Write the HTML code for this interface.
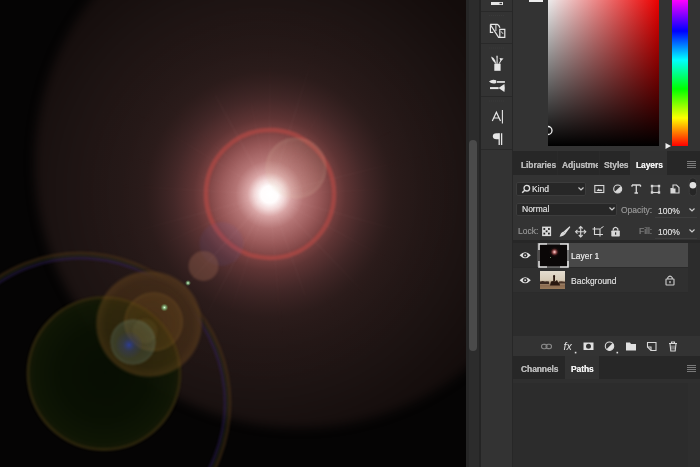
<!DOCTYPE html>
<html><head><meta charset="utf-8">
<style>
*{margin:0;padding:0;box-sizing:border-box}
html,body{width:700px;height:467px;overflow:hidden;background:#2c2c2c;font-family:"Liberation Sans",sans-serif}
.t{will-change:transform}
.a{position:absolute}
#canvas{left:0;top:0;width:467px;height:467px}
.t{color:#c4c4c4;font-size:9px;white-space:nowrap;line-height:1;text-shadow:0 0 0.5px currentColor}
.tab{color:#b8b8b8;font-size:8.5px;font-weight:bold;letter-spacing:-0.1px}
</style></head><body>
<!-- canvas -->
<svg id="canvas" class="a" width="467" height="467" viewBox="0 0 467 467">
<defs>
<filter id="b8" color-interpolation-filters="sRGB" x="-50%" y="-50%" width="200%" height="200%"><feGaussianBlur stdDeviation="7"/></filter>
<filter id="b2" color-interpolation-filters="sRGB" x="-50%" y="-50%" width="200%" height="200%"><feGaussianBlur stdDeviation="1.3"/></filter>
<filter id="b1" color-interpolation-filters="sRGB" x="-50%" y="-50%" width="200%" height="200%"><feGaussianBlur stdDeviation="0.9"/></filter>
<filter id="b5" color-interpolation-filters="sRGB" x="-10%" y="-10%" width="120%" height="120%"><feGaussianBlur stdDeviation="5"/></filter>
<filter id="b3" color-interpolation-filters="sRGB" x="-50%" y="-50%" width="200%" height="200%"><feGaussianBlur stdDeviation="3"/></filter>
<radialGradient id="halo" cx="262" cy="192" r="270" gradientUnits="userSpaceOnUse">
<stop offset="0" stop-color="#2a1c1b"/>
<stop offset="0.55" stop-color="#231716"/>
<stop offset="0.65" stop-color="#201514"/>
<stop offset="0.75" stop-color="#1c1312"/>
<stop offset="0.88" stop-color="#170f0e"/>
<stop offset="1" stop-color="#130c0b"/>
</radialGradient>
<radialGradient id="glow" cx="269.5" cy="194.5" r="190" gradientUnits="userSpaceOnUse">
<stop offset="0" stop-color="#ffffff"/>
<stop offset="0.045" stop-color="#fffcfc"/>
<stop offset="0.08" stop-color="#f2d8d8"/>
<stop offset="0.116" stop-color="#d8a4a4"/>
<stop offset="0.18" stop-color="#b47474"/>
<stop offset="0.263" stop-color="#985858"/>
<stop offset="0.326" stop-color="#7e4444"/>
<stop offset="0.4" stop-color="#5e3434"/>
<stop offset="0.505" stop-color="#442828" stop-opacity="0.95"/>
<stop offset="0.65" stop-color="#2e1d1c" stop-opacity="0.7"/>
<stop offset="0.82" stop-color="#261918" stop-opacity="0.3"/>
<stop offset="1" stop-color="#201514" stop-opacity="0"/>
</radialGradient>
<radialGradient id="gGreen" cx="0.5" cy="0.5" r="0.5">
<stop offset="0" stop-color="#0a1204" stop-opacity="0.8"/>
<stop offset="0.75" stop-color="#0e1605" stop-opacity="0.85"/>
<stop offset="0.92" stop-color="#1e220a" stop-opacity="0.9"/>
<stop offset="0.975" stop-color="#3e3412" stop-opacity="0.9"/>
<stop offset="1" stop-color="#3e3412" stop-opacity="0"/>
</radialGradient>
<radialGradient id="gGreen2" cx="0.5" cy="0.5" r="0.5">
<stop offset="0" stop-color="#091004" stop-opacity="0.85"/>
<stop offset="0.6" stop-color="#0b1304" stop-opacity="0.88"/>
<stop offset="0.9" stop-color="#101805" stop-opacity="0.9"/>
<stop offset="1" stop-color="#1a1c08" stop-opacity="0.9"/>
</radialGradient>
<radialGradient id="gOrange" cx="0.5" cy="0.5" r="0.5">
<stop offset="0" stop-color="#6e4818" stop-opacity="0.3"/>
<stop offset="0.8" stop-color="#704a1a" stop-opacity="0.34"/>
<stop offset="0.95" stop-color="#7a5220" stop-opacity="0.42"/>
<stop offset="1" stop-color="#7a5220" stop-opacity="0"/>
</radialGradient>
<radialGradient id="gInner" cx="0.5" cy="0.5" r="0.5">
<stop offset="0" stop-color="#805820" stop-opacity="0.2"/>
<stop offset="0.85" stop-color="#805820" stop-opacity="0.24"/>
<stop offset="0.97" stop-color="#8a6228" stop-opacity="0.3"/>
<stop offset="1" stop-color="#8a6228" stop-opacity="0"/>
</radialGradient>
<radialGradient id="gPale" cx="0.5" cy="0.5" r="0.5">
<stop offset="0" stop-color="#6a8a80" stop-opacity="0.16"/>
<stop offset="0.85" stop-color="#709a8a" stop-opacity="0.22"/>
<stop offset="0.97" stop-color="#80a898" stop-opacity="0.27"/>
<stop offset="1" stop-color="#80988a" stop-opacity="0"/>
</radialGradient>
<radialGradient id="gBlue" cx="0.5" cy="0.5" r="0.5">
<stop offset="0" stop-color="#2a40c0" stop-opacity="0.7"/>
<stop offset="0.45" stop-color="#2a3a90" stop-opacity="0.3"/>
<stop offset="1" stop-color="#2a3890" stop-opacity="0"/>
</radialGradient>
<radialGradient id="gDot" cx="0.5" cy="0.5" r="0.5">
<stop offset="0" stop-color="#f0fff0" stop-opacity="1"/>
<stop offset="0.3" stop-color="#a0e0a0" stop-opacity="0.8"/>
<stop offset="1" stop-color="#60a060" stop-opacity="0"/>
</radialGradient>
<radialGradient id="gPaleTop" cx="0.5" cy="0.5" r="0.5">
<stop offset="0" stop-color="#d8c0a0" stop-opacity="0.08"/>
<stop offset="0.85" stop-color="#d8c0a0" stop-opacity="0.12"/>
<stop offset="0.97" stop-color="#e0c8a8" stop-opacity="0.2"/>
<stop offset="1" stop-color="#e0c8a8" stop-opacity="0"/>
</radialGradient>
<mask id="rayMask" maskUnits="userSpaceOnUse" x="0" y="0" width="467" height="467"><circle cx="269.5" cy="194.5" r="170" fill="url(#rayGrad)"/></mask>
<radialGradient id="rayGrad" cx="269.5" cy="194.5" r="170" gradientUnits="userSpaceOnUse"><stop offset="0" stop-color="#fff"/><stop offset="0.3" stop-color="#999"/><stop offset="1" stop-color="#000"/></radialGradient>
<mask id="ringMask" maskUnits="userSpaceOnUse" x="0" y="0" width="467" height="467"><rect width="467" height="467" fill="#fff"/><circle cx="149" cy="324" r="52" fill="#000" filter="url(#b5)"/></mask>
</defs>
<rect width="467" height="467" fill="#050404"/>
<circle cx="299.5" cy="163" r="265" fill="url(#halo)" filter="url(#b5)"/>
<circle cx="269.5" cy="194.5" r="190" fill="url(#glow)"/>
<g mask="url(#rayMask)" filter="url(#b1)"><line x1="281.5" y1="194.0" x2="383.5" y2="189.3" stroke="#f0c0c0" stroke-width="1.12" stroke-opacity="0.07"/><line x1="281.1" y1="197.7" x2="392.7" y2="228.5" stroke="#f0c0c0" stroke-width="1.13" stroke-opacity="0.12"/><line x1="280.0" y1="200.3" x2="398.6" y2="265.2" stroke="#f0c0c0" stroke-width="0.84" stroke-opacity="0.13"/><line x1="277.8" y1="203.1" x2="376.5" y2="305.4" stroke="#f0c0c0" stroke-width="1.16" stroke-opacity="0.10"/><line x1="275.3" y1="205.0" x2="346.6" y2="335.1" stroke="#f0c0c0" stroke-width="0.68" stroke-opacity="0.08"/><line x1="273.5" y1="205.8" x2="305.1" y2="295.8" stroke="#f0c0c0" stroke-width="0.86" stroke-opacity="0.14"/><line x1="270.5" y1="206.5" x2="281.4" y2="334.1" stroke="#f0c0c0" stroke-width="0.90" stroke-opacity="0.09"/><line x1="265.7" y1="205.9" x2="231.4" y2="309.2" stroke="#f0c0c0" stroke-width="0.95" stroke-opacity="0.10"/><line x1="263.9" y1="205.1" x2="206.2" y2="315.7" stroke="#f0c0c0" stroke-width="1.01" stroke-opacity="0.13"/><line x1="261.4" y1="203.4" x2="158.8" y2="315.9" stroke="#f0c0c0" stroke-width="1.19" stroke-opacity="0.13"/><line x1="258.6" y1="199.6" x2="139.3" y2="255.3" stroke="#f0c0c0" stroke-width="1.12" stroke-opacity="0.08"/><line x1="257.9" y1="197.7" x2="108.3" y2="238.6" stroke="#f0c0c0" stroke-width="0.94" stroke-opacity="0.13"/><line x1="257.5" y1="193.8" x2="122.6" y2="185.9" stroke="#f0c0c0" stroke-width="1.10" stroke-opacity="0.08"/><line x1="257.9" y1="191.4" x2="138.1" y2="159.9" stroke="#f0c0c0" stroke-width="0.64" stroke-opacity="0.09"/><line x1="259.3" y1="188.2" x2="134.4" y2="112.0" stroke="#f0c0c0" stroke-width="0.65" stroke-opacity="0.14"/><line x1="260.5" y1="186.5" x2="154.1" y2="92.4" stroke="#f0c0c0" stroke-width="0.69" stroke-opacity="0.10"/><line x1="263.7" y1="184.0" x2="215.1" y2="94.9" stroke="#f0c0c0" stroke-width="1.12" stroke-opacity="0.13"/><line x1="267.1" y1="182.7" x2="251.1" y2="102.8" stroke="#f0c0c0" stroke-width="0.63" stroke-opacity="0.11"/><line x1="269.5" y1="182.5" x2="270.1" y2="47.0" stroke="#f0c0c0" stroke-width="1.13" stroke-opacity="0.09"/><line x1="273.1" y1="183.0" x2="319.9" y2="33.8" stroke="#f0c0c0" stroke-width="1.20" stroke-opacity="0.10"/><line x1="275.8" y1="184.3" x2="329.8" y2="96.9" stroke="#f0c0c0" stroke-width="0.96" stroke-opacity="0.08"/><line x1="277.3" y1="185.4" x2="329.8" y2="124.3" stroke="#f0c0c0" stroke-width="0.84" stroke-opacity="0.08"/><line x1="280.2" y1="189.0" x2="392.7" y2="130.6" stroke="#f0c0c0" stroke-width="0.63" stroke-opacity="0.08"/><line x1="281.1" y1="191.6" x2="424.1" y2="155.7" stroke="#f0c0c0" stroke-width="1.18" stroke-opacity="0.09"/></g>
<!-- red ring -->
<circle cx="270" cy="194" r="64" fill="none" stroke="#bc4a44" stroke-width="4.5" stroke-opacity="0.6" filter="url(#b2)"/>
<!-- pale disc -->
<circle cx="296" cy="168" r="31" fill="url(#gPaleTop)" filter="url(#b1)"/>
<!-- blue disc -->
<circle cx="221.5" cy="244" r="22" fill="#5a58b0" fill-opacity="0.1" filter="url(#b2)"/>
<!-- orange disc -->
<circle cx="203.5" cy="266" r="15" fill="#8a5848" fill-opacity="0.45" filter="url(#b1)"/>
<circle cx="188" cy="283" r="3" fill="url(#gDot)"/>
<!-- rainbow ring -->
<g mask="url(#ringMask)"><circle cx="80" cy="403" r="145" fill="none" stroke="#3a2470" stroke-width="3" stroke-opacity="0.38" filter="url(#b2)"/>
<circle cx="80" cy="403" r="147.5" fill="none" stroke="#2a3a20" stroke-width="2.5" stroke-opacity="0.35" filter="url(#b2)"/>
<circle cx="80" cy="403" r="150" fill="none" stroke="#503618" stroke-width="3" stroke-opacity="0.5" filter="url(#b2)"/></g>
<!-- big green disc -->
<circle cx="104" cy="373.6" r="77" fill="url(#gGreen2)" filter="url(#b1)"/>
<circle cx="104" cy="373.6" r="76" fill="none" stroke="#4a3612" stroke-width="3" stroke-opacity="0.42" filter="url(#b2)"/>
<!-- big orange disc -->
<circle cx="149" cy="324" r="54" fill="url(#gOrange)" filter="url(#b1)"/>
<circle cx="153.6" cy="321.8" r="30" fill="url(#gInner)" filter="url(#b1)"/>
<circle cx="145" cy="331" r="12.5" fill="#a08040" fill-opacity="0.12" filter="url(#b1)"/>
<!-- pale disc -->
<circle cx="133" cy="342" r="23" fill="url(#gPale)" filter="url(#b1)"/>
<circle cx="129" cy="345" r="14" fill="url(#gBlue)"/>
<circle cx="164.4" cy="307.5" r="4" fill="url(#gDot)"/>
</svg>

<!-- scrollbar track -->
<div class="a" style="left:466.5px;top:0;width:14.5px;height:467px;background:#2c2c2c"></div>
<div class="a" style="left:479.3px;top:0;width:1.7px;height:467px;background:#242424"></div>
<div class="a" style="left:465.5px;top:0;width:3.5px;height:467px;background:#262626"></div>
<div class="a" style="left:469px;top:140px;width:8px;height:211px;background:#4a4a4a;border-radius:4px"></div>
<!-- toolbar -->
<div class="a" style="left:481px;top:0;width:31px;height:467px;background:#333"></div>
<div class="a" style="left:481px;top:10.8px;width:31px;height:1px;background:#292929"></div>
<div class="a" style="left:481px;top:43px;width:31px;height:1px;background:#292929"></div>
<div class="a" style="left:481px;top:96px;width:31px;height:1px;background:#292929"></div>
<div class="a" style="left:481px;top:149px;width:31px;height:1px;background:#292929"></div>
<div class="a" style="left:512px;top:0;width:1px;height:467px;background:#272727"></div>
<svg class="a" style="left:481px;top:0" width="31" height="160" viewBox="481 0 31 160" fill="none" stroke="#e6e6e6" stroke-width="1.2">
<!-- top partial icon -->
<rect x="491" y="2" width="12" height="3" fill="#e6e6e6" stroke="none"/>
<rect x="499.5" y="2.8" width="2.5" height="1.4" fill="#333" stroke="none"/>
<!-- grip -->
<line x1="489" y1="15.5" x2="504" y2="15.5" stroke="#3a3a3a" stroke-dasharray="1 1"/>
<line x1="489" y1="48" x2="504" y2="48" stroke="#3a3a3a" stroke-dasharray="1 1"/>
<line x1="489" y1="101" x2="504" y2="101" stroke="#3a3a3a" stroke-dasharray="1 1"/>
<!-- artboard icon -->
<path d="M490.2 24.4 H497.3 Q499 25 499.9 27.8" stroke-width="1.2"/>
<path d="M490.4 24.6 V32.3 H493.2" stroke-width="1.2"/>
<path d="M490.5 24.8 L498.6 37.3 H504.8 V29.4 H499.8 V37" stroke-width="1.2"/>
<path d="M495.9 25 V31" stroke-width="1"/>
<path d="M501.1 31.4 L503 33.8" stroke-width="1"/>
<!-- brush holder -->
<rect x="494.3" y="63.7" width="6.3" height="7.1" fill="#e6e6e6" stroke="none"/>
<path d="M495.6 63.7 Q491.5 60 491.2 56.6 Q494 57.5 495.2 60.5 L496.3 63.7Z" fill="#e6e6e6" stroke="none"/>
<path d="M496.5 63.7 L496.6 58.5 Q495.8 56 497 55.2 Q498.3 56 497.6 58.5 L497.7 63.7Z" fill="#e6e6e6" stroke="none"/>
<path d="M498.6 63.7 L500.3 60.6 L499.6 58 L503.5 58.4 L501.2 61 L499.6 63.7Z" fill="#e6e6e6" stroke="none"/>
<!-- sliders -->
<path d="M489 81.6 Q492 78.6 496.2 80.2 L496.2 83 Q492 84.6 489 81.6Z" fill="#e6e6e6" stroke="none"/>
<rect x="496.8" y="81.1" width="8.1" height="1.7" fill="#e6e6e6" stroke="none"/>
<rect x="490" y="87.1" width="8.6" height="2" fill="#e6e6e6" stroke="none"/>
<path d="M498.5 88.1 L504.4 84.1 Q505.2 88 504.4 91.9 Z" fill="#e6e6e6" stroke="none"/>
<!-- A| -->
<path d="M492.3 121.1 L496.4 112.2 L500.5 121.1 M493.8 118 H499" stroke-width="1.2"/>
<line x1="502.4" y1="110" x2="502.4" y2="123.5" stroke-width="1.1"/>
<!-- pilcrow -->
<path d="M499.2 133.3 V145 M501.6 133.3 V145" stroke-width="1.3"/>
<path d="M502.2 133.2 H496.5 Q492.8 133.2 492.8 136.2 Q492.8 139.2 496.5 139.2 H499.2 V133.2Z" fill="#e6e6e6" stroke="none"/>
</svg>

<!-- top color panel -->
<div class="a" style="left:513px;top:0;width:187px;height:151px;background:#333"></div>
<div class="a" style="left:528.5px;top:0;width:14.5px;height:1.5px;background:#eee"></div>
<div class="a" style="left:548px;top:0;width:111px;height:146px;overflow:hidden"><div class="a" style="left:0;top:-12px;width:111px;height:158px;background:linear-gradient(to top,#000,rgba(0,0,0,0)),linear-gradient(to right,#fff,#f00)"></div></div>
<div class="a" style="left:672px;top:0;width:16px;height:146px;background:linear-gradient(to bottom,#f0f 0px,#00f 31px,#0ff 60px,#0f0 89px,#ff0 118px,#f00 146px)"></div>
<svg class="a" style="left:540px;top:120px" width="150" height="32" viewBox="540 120 150 32">
<clipPath id="fc"><rect x="548" y="120" width="20" height="26"/></clipPath><circle cx="548" cy="130.5" r="4" fill="none" stroke="#eee" stroke-width="1.3" clip-path="url(#fc)"/>
<path d="M665.5 143 L671 146 L665.5 149 Z" fill="#eee"/>
</svg>

<!-- tabs -->
<div class="a" style="left:513px;top:151px;width:187px;height:24px;background:#272727"></div>
<div class="a" style="left:556.5px;top:151px;width:1px;height:24px;background:#2a2a2a"></div><div class="a" style="left:599px;top:151px;width:1px;height:24px;background:#2a2a2a"></div>
<div class="a" style="left:630px;top:151px;width:37px;height:24px;background:#323232"></div>
<div class="a t tab" style="left:520.5px;top:160.5px">Libraries</div>
<div class="a" style="left:562px;top:160px;width:35.5px;height:12px;overflow:hidden"><div class="t tab" style="padding-top:0.5px">Adjustments</div></div>
<div class="a t tab" style="left:604px;top:160.5px">Styles</div>
<div class="a t tab" style="left:635.5px;top:160.5px;color:#f0f0f0">Layers</div>
<svg class="a" style="left:686px;top:160px" width="12" height="9" viewBox="0 0 12 9"><path d="M1 1.5H10M1 3.5H10M1 5.5H10M1 7.5H10" stroke="#7a7a7a" stroke-width="1.1"/></svg>

<!-- layers panel -->
<div class="a" style="left:513px;top:175px;width:187px;height:67px;background:#333"></div>
<div class="a" style="left:516px;top:182px;width:70px;height:14px;background:#272727;border:1px solid #3c3c3c;border-radius:2px"></div>
<svg class="a" style="left:521px;top:184px" width="10" height="10" viewBox="0 0 10 10"><circle cx="5.8" cy="4.2" r="2.8" fill="none" stroke="#ddd" stroke-width="1.3"/><path d="M3.8 6.2L1.2 8.8" stroke="#ddd" stroke-width="1.5"/></svg>
<div class="a t" style="left:532px;top:184.5px;color:#d0d0d0;font-size:8.5px">Kind</div>
<svg class="a" style="left:577px;top:186px" width="8" height="6" viewBox="0 0 8 6"><path d="M1.5 1.5L4 4L6.5 1.5" fill="none" stroke="#ccc" stroke-width="1.2"/></svg>
<!-- kind icons -->
<svg class="a" style="left:590px;top:176px" width="110" height="26" viewBox="590 176 110 26" fill="none" stroke="#d8d8d8" stroke-width="1.1">
<rect x="594.8" y="185.5" width="9" height="7" />
<path d="M596.5 191 L598.5 188.5 L600 190 L601 189 L602.5 191 Z" fill="#d8d8d8" stroke="none"/>
<circle cx="617.7" cy="189" r="4" />
<path d="M614.8 191.8 A4 4 0 0 0 620.5 186.2 Z" fill="#d8d8d8" stroke="none"/>
<path d="M632 185 L640.5 185 M636.3 185 L636.3 193 M634.5 193 L638 193 M632 185 L632 186.8 M640.5 185 L640.5 186.8" stroke-width="1.3"/>
<rect x="652" y="186" width="7" height="6.5"/>
<rect x="650.8" y="184.8" width="2.4" height="2.4" fill="#d8d8d8" stroke="none"/>
<rect x="657.8" y="184.8" width="2.4" height="2.4" fill="#d8d8d8" stroke="none"/>
<rect x="650.8" y="191.3" width="2.4" height="2.4" fill="#d8d8d8" stroke="none"/>
<rect x="657.8" y="191.3" width="2.4" height="2.4" fill="#d8d8d8" stroke="none"/>
<path d="M673 185 L676.5 185 L679 187.5 L679 193 L671 193 L671 188.5 L673 188.5 Z" />
<rect x="671" y="188.5" width="4.5" height="4.5" fill="#d8d8d8" stroke="none"/>
<rect x="689.2" y="177.8" width="7.4" height="18.2" rx="3.7" fill="#262626" stroke="#3c3c3c" stroke-width="1"/>
<circle cx="692.9" cy="185.2" r="3.3" fill="#e0e0e0" stroke="none"/>
</svg>
<div class="a" style="left:516px;top:202.7px;width:101px;height:13.5px;background:#272727;border:1px solid #3c3c3c;border-radius:2px"></div>
<div class="a t" style="left:521.5px;top:205.3px;color:#d0d0d0;font-size:8.5px">Normal</div>
<svg class="a" style="left:608px;top:206px" width="8" height="6" viewBox="0 0 8 6"><path d="M1.5 1.5L4 4L6.5 1.5" fill="none" stroke="#ccc" stroke-width="1.2"/></svg>
<div class="a t" style="left:620.5px;top:206px;color:#8c8c8c;font-size:8.5px">Opacity:</div>
<div class="a t" style="left:657.5px;top:206.5px;color:#d0d0d0;font-size:8.5px">100%</div>
<div class="a" style="left:655px;top:217px;width:42px;height:1px;background:#3e3e3e"></div>
<svg class="a" style="left:688px;top:207px" width="8" height="6" viewBox="0 0 8 6"><path d="M1.5 1.5L4 4L6.5 1.5" fill="none" stroke="#ccc" stroke-width="1.2"/></svg>
<div class="a t" style="left:517.5px;top:227px;color:#8c8c8c;font-size:8.5px">Lock:</div>
<svg class="a" style="left:540px;top:224px" width="85" height="15" viewBox="540 224 85 15" fill="none" stroke="#d8d8d8" stroke-width="1.1">
<rect x="542.1" y="226.6" width="9" height="9.5" fill="#dcdcdc" stroke="none"/>
<rect x="543.4" y="228.1" width="1.8" height="1.8" fill="#222" stroke="none"/>
<rect x="548" y="228.1" width="1.8" height="1.8" fill="#222" stroke="none"/>
<rect x="545.7" y="230.4" width="1.8" height="1.8" fill="#222" stroke="none"/>
<rect x="543.4" y="232.7" width="1.8" height="1.8" fill="#222" stroke="none"/>
<rect x="548" y="232.7" width="1.8" height="1.8" fill="#222" stroke="none"/>
<path d="M569.6 226.2 L570.4 227 L565.6 233.4 L563.6 231.6 Z" fill="#dcdcdc" stroke="none"/>
<path d="M563.4 231.4 Q560.6 232.4 559.6 236.8 Q564.2 236 565.8 233.6 Z" fill="#dcdcdc" stroke="none"/><circle cx="563" cy="234.2" r="0.6" fill="#777"/>
<path d="M580.7 227 L580.7 236.5 M576 231.7 L585.5 231.7" stroke-width="1.1"/>
<path d="M578.8 228.5 L580.7 226.6 L582.6 228.5 M578.8 235 L580.7 236.9 L582.6 235 M577.5 229.8 L575.6 231.7 L577.5 233.6 M583.9 229.8 L585.8 231.7 L583.9 233.6" stroke-width="1.1"/>
<path d="M592.5 229 L600 229 L600 236.5 M594.5 227 L594.5 234.5 L603 234.5" stroke-width="1.1"/>
<path d="M600.5 228.5 L603.5 226.5" stroke-width="1"/>
<rect x="611.3" y="230.5" width="8.5" height="6" rx="0.8" fill="#d8d8d8" stroke="none"/>
<path d="M613.3 230.5 L613.3 228.8 Q615.5 225.8 617.8 228.8 L617.8 230.5" stroke-width="1.2"/>
<rect x="615" y="232.3" width="1.2" height="2.4" fill="#333" stroke="none"/>
</svg>
<div class="a t" style="left:639px;top:227px;color:#777;font-size:8.5px">Fill:</div>
<div class="a t" style="left:657.5px;top:227.5px;color:#d0d0d0;font-size:8.5px">100%</div>
<div class="a" style="left:655px;top:237.5px;width:42px;height:1px;background:#3e3e3e"></div>
<svg class="a" style="left:688px;top:228px" width="8" height="6" viewBox="0 0 8 6"><path d="M1.5 1.5L4 4L6.5 1.5" fill="none" stroke="#ccc" stroke-width="1.2"/></svg>

<!-- layer list -->
<div class="a" style="left:513px;top:242px;width:187px;height:94px;background:#2c2c2c"></div>
<div class="a" style="left:513px;top:267.5px;width:175px;height:25px;background:#303030"></div>
<div class="a" style="left:513px;top:240.3px;width:187px;height:2.3px;background:#272727"></div>
<div class="a" style="left:537px;top:242.6px;width:151px;height:24px;background:#484848"></div>
<div class="a" style="left:513px;top:267px;width:175px;height:1px;background:#2a2a2a"></div>
<div class="a" style="left:513px;top:292px;width:175px;height:1px;background:#2b2b2b"></div>
<svg class="a" style="left:518px;top:248px" width="15" height="40" viewBox="518 248 15 40">
<path d="M519.6 255.3 Q525.2 249.3 530.8 255.3 Q525.2 261.3 519.6 255.3 Z" fill="#e4e4e4"/>
<circle cx="525.2" cy="255.3" r="2.3" fill="#2e2e2e"/>
<circle cx="525.2" cy="255.3" r="0.9" fill="#cfcfcf"/>
<path d="M519.6 280.2 Q525.2 274.2 530.8 280.2 Q525.2 286.2 519.6 280.2 Z" fill="#e4e4e4"/>
<circle cx="525.2" cy="280.2" r="2.3" fill="#2e2e2e"/>
<circle cx="525.2" cy="280.2" r="0.9" fill="#cfcfcf"/>
</svg>
<!-- layer1 thumb -->
<div class="a" style="left:538px;top:243.5px;width:29px;height:23.5px;background:#0a0707"></div>
<div class="a" style="left:549px;top:247px;width:11px;height:10px;background:radial-gradient(circle at 50% 50%,#ffe0e0 0,#d08a8a 14%,#6a3030 32%,rgba(50,20,20,0.35) 50%,rgba(40,15,15,0) 72%)"></div><div class="a" style="left:549.5px;top:257px;width:1.2px;height:1.2px;background:#6a8a60"></div>
<svg class="a" style="left:537.5px;top:243.3px" width="31" height="25" viewBox="0 0 31 25" fill="none" stroke="#e8e8e8" stroke-width="1.6">
<path d="M1 7V1H9 M22 1H30V7 M30 18V24H22 M9 24H1V18"/>
<path d="M1 7V18 M9 1H22 M30 7V18 M9 24H22" stroke="#b8b8b8" stroke-width="0.8"/>
</svg>
<div class="a t" style="left:570.5px;top:252px;color:#e0e0e0;font-size:8.5px">Layer 1</div>
<!-- bg thumb -->
<div class="a" style="left:539.5px;top:270.8px;width:25px;height:18.5px;background:linear-gradient(to bottom,#e4ddd0 0%,#d8ccb8 50%,#b8a48a 62%,#8a6a50 80%,#9a7a5a 100%)"></div>
<svg class="a" style="left:539.5px;top:270.8px" width="25" height="18.5" viewBox="0 0 25 18.5">
<path d="M0 10.5 Q3 9.5 5 10.5 Q7 9.8 9 10.6 L9 13 L0 13Z" fill="#3a2820"/>
<path d="M10 14.5 L11 10.5 Q13 9.5 15 10.5 L17 9 L18 11 Q20 11.5 20 14.5 Z" fill="#2a1810"/>
<rect x="13.2" y="5.5" width="1.8" height="5" fill="#2a1810"/>
<circle cx="14.1" cy="5.2" r="1.1" fill="#2a1810"/>
<path d="M19 10.5 Q22 10 25 10.8 L25 12.5 L19 12.5Z" fill="#4a3428"/>
</svg>
<div class="a t" style="left:570.5px;top:277px;color:#d0d0d0;font-size:8.5px">Background</div>
<svg class="a" style="left:664px;top:274px" width="12" height="12" viewBox="0 0 12 12" fill="none" stroke="#d0d0d0" stroke-width="1.1">
<rect x="2" y="5" width="8" height="6" rx="0.5"/>
<path d="M3.8 5V3.5Q6 0.8 8.2 3.5V5"/>
<rect x="5.4" y="7" width="1.2" height="2.2" fill="#d0d0d0" stroke="none"/>
</svg>

<!-- bottom bar -->
<div class="a" style="left:513px;top:336px;width:187px;height:20px;background:#333"></div>
<svg class="a" style="left:530px;top:336px;will-change:transform" width="170" height="20" viewBox="530 336 170 20" fill="none" stroke="#d8d8d8" stroke-width="1.1">
<path d="M543.5 344.5 H545.5 M547.5 348.5 H549.5" stroke="#888"/>
<rect x="541.5" y="344.2" width="5.5" height="4.5" rx="2.2" stroke="#888"/>
<rect x="546" y="344.2" width="5.5" height="4.5" rx="2.2" stroke="#888"/>
<text x="563.5" y="350" fill="#e0e0e0" stroke="none" font-family="Liberation Sans" font-style="italic" font-size="10.5">fx</text>
<rect x="574.8" y="351.8" width="1.6" height="1.6" fill="#e0e0e0" stroke="none"/>
<rect x="583.5" y="342.5" width="10" height="7.5" fill="#e0e0e0" stroke="none"/>
<circle cx="588.5" cy="346.2" r="2.5" fill="#333" stroke="none"/>
<circle cx="609.5" cy="346.2" r="4.2"/>
<path d="M606.5 349.2 A4.2 4.2 0 0 0 612.5 343.2 Z" fill="#e0e0e0" stroke="none"/>
<rect x="616.5" y="351.8" width="1.6" height="1.6" fill="#e0e0e0" stroke="none"/>
<path d="M626 342.5 H630 L631 344 H636 V350.5 H626 Z" fill="#e0e0e0" stroke="none"/>
<path d="M647.5 342.5 H656 V350.5 H651 L647.5 347 Z" />
<path d="M647.5 347 H651 V350.5" />
<path d="M669 343.5 H677 M671.5 343.5 V342 H674.5 V343.5 M670 343.5 L670.8 351 H675.2 L676 343.5" />
<path d="M672 345.5 V349.5 M674 345.5 V349.5" stroke-width="0.8"/>
</svg>

<!-- channels/paths -->
<div class="a" style="left:513px;top:356px;width:187px;height:23px;background:#272727"></div>
<div class="a" style="left:565px;top:356px;width:34px;height:23px;background:#323232"></div>
<div class="a t tab" style="left:520.5px;top:365px">Channels</div>
<div class="a t tab" style="left:571px;top:365px;color:#f0f0f0">Paths</div>
<svg class="a" style="left:686px;top:364px" width="12" height="9" viewBox="0 0 12 9"><path d="M1 1.5H10M1 3.5H10M1 5.5H10M1 7.5H10" stroke="#7a7a7a" stroke-width="1.1"/></svg>
<div class="a" style="left:513px;top:379px;width:187px;height:88px;background:#2c2c2c"></div>
<div class="a" style="left:513px;top:379px;width:187px;height:4px;background:#2f2f2f"></div>
<div class="a" style="left:688px;top:383px;width:12px;height:84px;background:#2e2e2e"></div>
</body></html>
